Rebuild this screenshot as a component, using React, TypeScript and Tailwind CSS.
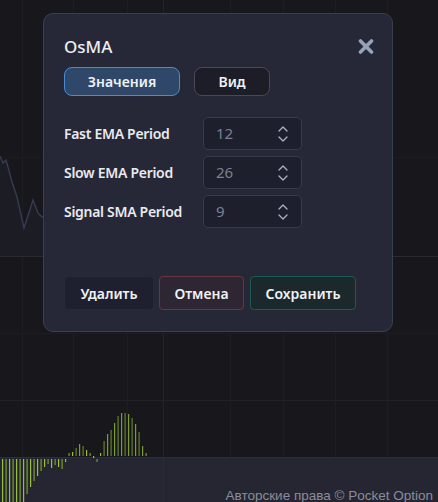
import React from "react";

const bars = [-50,-50,-50,-50,-50,-50,-48,-35,-28,-22,-17,-12,-8,-5,-9,-6,-8,-10,-3,3,4,8,12,10,6,3,0,-3,3,15,22,26,33,40,43,43,42,38,32,24,10,3];

function Chart() {
  const zero = 457;
  return (
    <svg className="absolute inset-0" width="438" height="502" viewBox="0 0 438 502">
      {[22, 73, 127, 163, 230, 283, 335, 387].map((x) => (
        <line key={x} x1={x + 0.5} y1="0" x2={x + 0.5} y2="457" stroke={x === 163 ? "#232228" : "#1e1d22"} strokeWidth="1" />
      ))}
      <line x1="0" y1="157.5" x2="438" y2="157.5" stroke="#1d1c21" />
      <line x1="0" y1="333.5" x2="438" y2="333.5" stroke="#1d1c21" />
      <path d="M0 156 L3 163 L6 160 L8 167 L12 182 L17 197 L24 228 L33 200 L38 213 L42 217 L50 214 L50 256 L0 256 Z" fill="#1c1c25" />
      <path d="M0 156 L3 163 L6 160 L8 167 L12 182 L17 197 L24 228 L33 200 L38 213 L42 217 L50 214" fill="none" stroke="#363b52" strokeWidth="1.4" />
      <line x1="0" y1="256.5" x2="438" y2="256.5" stroke="#2b2a31" />
      <line x1="0" y1="400.5" x2="438" y2="400.5" stroke="#222127" />
      <rect x="0" y="457" width="438" height="45" fill="#252632" />
      <line x1="0" y1="457.5" x2="438" y2="457.5" stroke="#2c2d3a" />
      <line x1="163.5" y1="457" x2="163.5" y2="502" stroke="#2a2b37" />
      {bars.map((v, i) => {
        const x = 2 + i * 3.5;
        const y1 = v >= 0 ? zero - 1 - v : zero + 2;
        const h = Math.max(2, Math.abs(v));
        return (
          <rect key={i} x={x} y={y1} width="1.2" height={h} fill={i % 2 === 0 ? "#9cc83e" : "#7ea233"} opacity={v > 6 ? 0.75 : 0.95} />
        );
      })}
    </svg>
  );
}

function Chevrons() {
  return (
    <svg width="12" height="18" viewBox="0 0 12 18" fill="none" stroke="#aab2c2" strokeWidth="1.3" strokeLinecap="round" strokeLinejoin="round">
      <path d="M2 6 L6 2 L10 6" />
      <path d="M2 12 L6 16 L10 12" />
    </svg>
  );
}

function Field({ label, value }: { label: string; value: string }) {
  return (
    <div className="flex items-center h-[33px]">
      <div className="w-[139px] text-[14px] font-semibold tracking-[-0.3px] text-[#e9eaef] leading-none">{label}</div>
      <div className="w-[99px] h-[33px] rounded-[5px] border border-[#383b4c] bg-[#1d1f2c] flex items-center justify-between pl-[12px] pr-[12px]">
        <span className="text-[15px] text-[#7b8192] leading-none">{value}</span>
        <Chevrons />
      </div>
    </div>
  );
}

export default function App() {
  return (
    <div className="relative w-[438px] h-[502px] overflow-hidden bg-[#18171b]" style={{ fontFamily: '"Noto Sans", "Open Sans", sans-serif' }}>
      <Chart />
      <div className="absolute right-[5px] bottom-[0px] text-[13.5px] text-[#8b8d99] leading-none" style={{ fontFamily: '"Liberation Sans", Arial, sans-serif' }}>
        Авторские права © Pocket Option
      </div>
      <div className="absolute left-[43px] top-[13px] w-[350px] h-[319px] rounded-[10px] border border-[#3b3e4e] bg-[#262837] px-[20px] pt-[20px] flex flex-col">
        <div className="flex items-center justify-between h-[24px]">
          <span className="text-[17px] font-medium text-[#eceef3] leading-none">OsMA</span>
          <svg width="16" height="15" viewBox="0 0 16 15" className="-mr-[2px]" fill="none" stroke="#95a3b8" strokeWidth="3.6" strokeLinecap="round">
            <path d="M2.5 2 L13.5 13" />
            <path d="M13.5 2 L2.5 13" />
          </svg>
        </div>
        <div className="flex gap-[14px] mt-[9px]">
          <div className="w-[116px] h-[29px] rounded-[8px] border border-[#4a8bd0] bg-[#2f4869] flex items-center justify-center text-[14px] font-semibold text-[#eef1f6]">
            Значения
          </div>
          <div className="w-[76px] h-[29px] rounded-[8px] border border-[#464956] bg-[#1c1d26] flex items-center justify-center text-[14px] font-semibold text-[#eef1f6]">
            Вид
          </div>
        </div>
        <div className="flex flex-col gap-[6px] mt-[21px]">
          <Field label="Fast EMA Period" value="12" />
          <Field label="Slow EMA Period" value="26" />
          <Field label="Signal SMA Period" value="9" />
        </div>
        <div className="flex mt-[48px]">
          <div className="w-[90px] h-[34px] rounded-[4px] border border-[#272a39] bg-[#1e2030] flex items-center justify-center text-[14px] font-semibold text-[#f0f1f5]">
            Удалить
          </div>
          <div className="ml-[5px] w-[85px] h-[34px] rounded-[4px] border border-[#6d3440] bg-[#2e2632] flex items-center justify-center text-[14px] font-semibold text-[#f0f1f5]">
            Отмена
          </div>
          <div className="ml-[6px] w-[106px] h-[34px] rounded-[4px] border border-[#1e5b4b] bg-[#1b292d] flex items-center justify-center text-[14px] font-semibold text-[#f0f1f5]">
            Сохранить
          </div>
        </div>
      </div>
    </div>
  );
}
